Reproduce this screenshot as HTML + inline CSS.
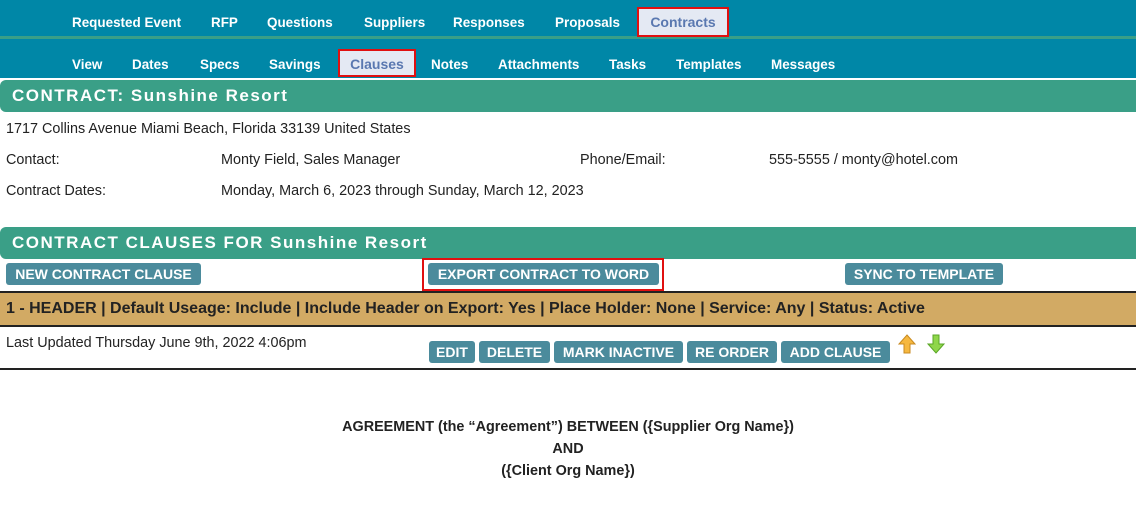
<!DOCTYPE html>
<html><head><meta charset="utf-8"><style>
*{margin:0;padding:0;box-sizing:border-box}
body{width:1136px;height:518px;overflow:hidden;background:#fff;font-family:"Liberation Sans",Arial,sans-serif;position:relative;color:#222}
.a{position:absolute}
.nav{left:0;width:1136px;background:#0087a7}
.nl{position:absolute;color:#fff;font-weight:bold;font-size:14px;transform:scaleX(0.96);transform-origin:left}
.act{position:absolute;background:#e4e9f3;color:#5a78b0;font-weight:bold;font-size:14px;border:2px solid #e01010;text-align:center}
.gh{left:0;width:1136px;background:#3a9f87;color:#fff;font-weight:bold;font-size:17px;letter-spacing:1.5px;border-radius:6px 0 0 6px;padding-left:12px}
.t{font-size:14.4px;color:#222}
.btn{position:absolute;background:#4b8b9c;color:#fff;font-weight:bold;font-size:14px;height:22px;line-height:22px;border-radius:3px;text-align:center;transform-origin:left}
</style></head><body>
<div class="a nav" style="top:0;height:36px"></div>
<div class="a" style="top:36px;left:0;width:1136px;height:3px;background:#3a9f87"></div>
<div class="a nav" style="top:39px;height:39px"></div>
<span class="nl" style="left:72px;top:14px">Requested Event</span>
<span class="nl" style="left:211px;top:14px">RFP</span>
<span class="nl" style="left:267px;top:14px">Questions</span>
<span class="nl" style="left:364px;top:14px">Suppliers</span>
<span class="nl" style="left:453px;top:14px">Responses</span>
<span class="nl" style="left:555px;top:14px">Proposals</span>
<div class="act" style="left:637px;top:7px;width:92px;height:30px;line-height:26px">Contracts</div>
<span class="nl" style="left:72px;top:56px">View</span>
<span class="nl" style="left:132px;top:56px">Dates</span>
<span class="nl" style="left:200px;top:56px">Specs</span>
<span class="nl" style="left:269px;top:56px">Savings</span>
<div class="act" style="left:338px;top:49px;width:78px;height:28px;line-height:26px">Clauses</div>
<span class="nl" style="left:431px;top:56px">Notes</span>
<span class="nl" style="left:498px;top:56px">Attachments</span>
<span class="nl" style="left:609px;top:56px">Tasks</span>
<span class="nl" style="left:676px;top:56px">Templates</span>
<span class="nl" style="left:771px;top:56px">Messages</span>
<div class="a gh" style="top:80px;height:32px;line-height:32px">CONTRACT: Sunshine Resort</div>
<div class="a t" style="left:6px;top:121px">1717 Collins Avenue Miami Beach, Florida 33139 United States</div>
<div class="a t" style="left:6px;top:152px">Contact:</div>
<div class="a t" style="left:221px;top:152px">Monty Field, Sales Manager</div>
<div class="a t" style="left:580px;top:152px">Phone/Email:</div>
<div class="a t" style="left:769px;top:152px">555-5555 / monty@hotel.com</div>
<div class="a t" style="left:6px;top:183px">Contract Dates:</div>
<div class="a t" style="left:221px;top:183px">Monday, March 6, 2023 through Sunday, March 12, 2023</div>
<div class="a gh" style="top:227px;height:32px;line-height:32px">CONTRACT CLAUSES FOR Sunshine Resort</div>
<div class="btn" style="left:6px;top:263px;width:195px">NEW CONTRACT CLAUSE</div>
<div class="a" style="left:422px;top:258px;width:242px;height:33px;border:2px solid #e01010"></div>
<div class="btn" style="left:428px;top:263px;width:231px">EXPORT CONTRACT TO WORD</div>
<div class="btn" style="left:845px;top:263px;width:158px">SYNC TO TEMPLATE</div>
<div class="a" style="left:0;top:291px;width:1136px;height:36px;background:#d2aa64;border-top:2px solid #222;border-bottom:2px solid #222;font-weight:bold;font-size:16px;line-height:32px;padding-left:6px;color:#222">1 - HEADER | Default Useage: Include | Include Header on Export: Yes | Place Holder: None | Service: Any | Status: Active</div>
<div class="a t" style="left:6px;top:335px">Last Updated Thursday June 9th, 2022 4:06pm</div>
<div class="btn" style="left:429px;top:341px;width:46px">EDIT</div>
<div class="btn" style="left:479px;top:341px;width:71px">DELETE</div>
<div class="btn" style="left:554px;top:341px;width:129px">MARK INACTIVE</div>
<div class="btn" style="left:687px;top:341px;width:90px">RE ORDER</div>
<div class="btn" style="left:781px;top:341px;width:109px">ADD CLAUSE</div>
<svg class="a" style="left:897px;top:334px" width="20" height="20"><path d="M10 1 L18 10 L13 10 L13 19 L7 19 L7 10 L2 10 Z" fill="#f6b840" stroke="#c88a20"/></svg>
<svg class="a" style="left:926px;top:334px" width="20" height="20"><path d="M10 19 L18 10 L13 10 L13 1 L7 1 L7 10 L2 10 Z" fill="#8fd64a" stroke="#5aa626"/></svg>
<div class="a" style="left:0;top:368px;width:1136px;height:2px;background:#222"></div>
<div class="a" style="left:0;top:416px;width:1136px;text-align:center;font-weight:bold;font-size:14.4px;line-height:22px;color:#222">AGREEMENT (the “Agreement”) BETWEEN ({Supplier Org Name})<br>AND<br>({Client Org Name})</div>
</body></html>
